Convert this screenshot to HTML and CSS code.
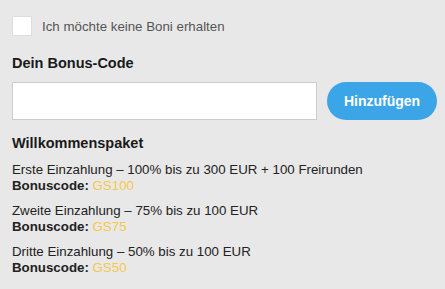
FILE: index.html
```html
<!DOCTYPE html>
<html lang="de">
<head>
    <meta charset="UTF-8">
    <title>Bonus</title>
    <link rel="stylesheet" href="styles.css">
</head>
<body>
    <div class="container">
        <label class="no-bonus">
            <span class="checkbox"></span>
            <span class="no-bonus-text">Ich möchte keine Boni erhalten</span>
        </label>

        <h2>Dein Bonus-Code</h2>
        <form class="code-form">
            <input type="text" class="code-input">
            <button type="button">Hinzufügen</button>
        </form>

        <h2 class="package-title">Willkommenspaket</h2>
        <div class="offer">
            <div>Erste Einzahlung – 100% bis zu 300 EUR + 100 Freirunden</div>
            <div><b>Bonuscode:</b> <span class="code">GS100</span></div>
        </div>
        <div class="offer">
            <div>Zweite Einzahlung – 75% bis zu 100 EUR</div>
            <div><b>Bonuscode:</b> <span class="code">GS75</span></div>
        </div>
        <div class="offer">
            <div>Dritte Einzahlung – 50% bis zu 100 EUR</div>
            <div><b>Bonuscode:</b> <span class="code">GS50</span></div>
        </div>
    </div>
</body>
</html>
```

FILE: styles.css
```css
body {
    margin: 0;
    background-color: #e8e8e8;
    font-family: "Liberation Sans", Arial, sans-serif;
    font-size: 13.3px;
    color: #222;
}
.container {
    padding: 16px 8px 0 12px;
}
.no-bonus {
    display: flex;
    align-items: center;
}
.checkbox {
    width: 18px;
    height: 18px;
    background-color: #fff;
    border: 1px solid #ddd;
}
.no-bonus-text {
    margin-left: 10px;
    color: #555;
}
h2 {
    font-size: 14.5px;
    font-weight: bold;
    margin: 19px 0 11px;
    color: #1a1a1a;
}
.code-form {
    display: flex;
    align-items: center;
    gap: 10px;
}
.code-input {
    width: 305px;
    height: 38px;
    box-sizing: border-box;
    border: 1px solid #ccc;
    background-color: #fff;
    margin: 0;
}
button {
    width: 110px;
    height: 38px;
    border: none;
    border-radius: 19px;
    background-color: #3ca5e8;
    color: #fff;
    font-family: "Liberation Sans", Arial, sans-serif;
    font-size: 14px;
    font-weight: bold;
}
.package-title {
    margin: 15px 0 11px;
}
.offer {
    line-height: 16px;
    margin-bottom: 9px;
}
.code {
    color: #f5c84a;
}
```
